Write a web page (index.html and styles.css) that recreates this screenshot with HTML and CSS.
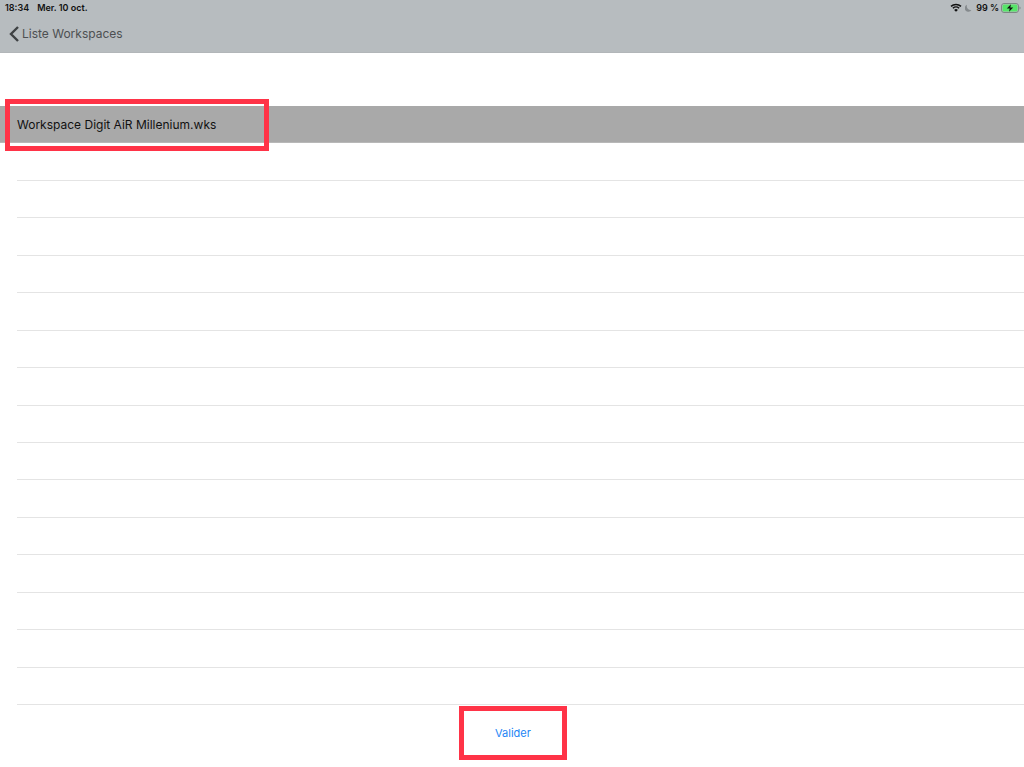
FILE: index.html
```html
<!DOCTYPE html>
<html lang="fr">
<head>
    <meta charset="UTF-8">
    <meta name="viewport" content="width=device-width, initial-scale=1.0">
    <title>Liste Workspaces</title>
    <link rel="stylesheet" href="styles.css">
</head>
<body>

<header class="header">
    <div class="status">
        <span>18:34</span>
        <span class="date">Mer. 10 oct.</span>
        <svg class="wifi" width="12" height="9" viewBox="0 0 12 9">
            <path d="M1 3.4a7.2 7.2 0 0 1 10 0M2.9 5.3a4.5 4.5 0 0 1 6.2 0" fill="none" stroke="#111" stroke-width="1.5"/>
            <path d="M6 8.8L4.1 6.9a2.7 2.7 0 0 1 3.8 0z" fill="#111"/>
        </svg>
        <svg class="moon" width="7" height="8" viewBox="0 0 7 8">
            <path d="M2 .8A3.6 3.6 0 1 0 6.4 6 4 4 0 0 1 2 .8z" fill="#858a8d"/>
        </svg>
        <span>99 %</span>
        <svg class="battery" width="20" height="10" viewBox="0 0 20 10">
            <rect x=".5" y=".5" width="17" height="9" rx="2.5" fill="#b7bcbf" stroke="#7d8784"/>
            <rect x="1.5" y="1.5" width="15" height="7" rx="1.5" fill="#56e569"/>
            <path d="M18.5 3.5a1.6 1.6 0 0 1 0 3z" fill="#7d8784"/>
            <path d="M10 1.2L5.8 5.4h2.9L8 8.8l4.2-4.2H9.3z" fill="#111"/>
        </svg>
    </div>
    <nav class="nav">
        <a class="back" href="#">
            <svg width="10" height="16" viewBox="0 0 10 16">
                <path d="M9 1L2 8l7 7" fill="none" stroke="#3f4244" stroke-width="2.4"/>
            </svg>
            Liste Workspaces
        </a>
    </nav>
</header>

<main class="content">
    <ul class="list">
        <li class="row selected">Workspace Digit AiR Millenium.wks</li>
        <li class="row"></li>
        <li class="row"></li>
        <li class="row"></li>
        <li class="row"></li>
        <li class="row"></li>
        <li class="row"></li>
        <li class="row"></li>
        <li class="row"></li>
        <li class="row"></li>
        <li class="row"></li>
        <li class="row"></li>
        <li class="row"></li>
        <li class="row"></li>
        <li class="row"></li>
        <li class="row"></li>
    </ul>
</main>

<footer class="footer">
    <button type="button" class="validate">Valider</button>
</footer>

</body>
</html>
```

FILE: styles.css
```css
* {
    box-sizing: border-box;
}
body {
    display: flex;
    flex-direction: column;
    min-height: 100vh;
    margin: 0;
    background-color: white;
    color: #111;
    font-family: Inter, "Liberation Sans", sans-serif;
    font-size: 12px;
}
.header {
    height: 53px;
    background-color: #b7bcbf;
    border-bottom: 1px solid #b2b6b9;
}
.status {
    display: flex;
    align-items: center;
    height: 15px;
    padding: 0 3px 0 5px;
    font-size: 9px;
    font-weight: 600;
}
.date {
    margin-left: 8px;
}
.wifi {
    margin-left: auto;
}
.moon {
    margin: 0 4px 0 3px;
}
.battery {
    margin-left: 2px;
}
.nav {
    display: flex;
    align-items: center;
    height: 37px;
    padding: 0 9px;
}
.back {
    display: flex;
    align-items: center;
    gap: 3px;
    color: #4d5052;
    text-decoration: none;
}
.content {
    display: flex;
    flex: 1;
    padding-top: 53px;
}
.list {
    display: flex;
    flex: 1;
    flex-direction: column;
    margin: 0;
    padding: 0;
    list-style: none;
}
.row {
    flex: 1;
    min-height: 36px;
    margin-left: 17px;
    border-bottom: 1px solid #e4e4e4;
}
.selected {
    display: flex;
    align-items: center;
    position: relative;
    margin-left: 0;
    padding-left: 17px;
    background-color: #a9a9a9;
    border-bottom-color: #b8b8b8;
}
/* Red frame around the chosen file */
.selected::before {
    content: "";
    box-sizing: border-box;
    position: absolute;
    top: -7px;
    bottom: -9px;
    left: 5px;
    width: 264px;
    border: 5px solid #ff3347;
}
.footer {
    padding: 1px 0 7px 2px;
}
.validate {
    display: block;
    width: 108px;
    height: 54px;
    margin: 0 auto;
    border: 5px solid #ff3347;
    background-color: white;
    color: #2385f5;
    font-family: inherit;
    font-size: 11px;
    cursor: pointer;
}
```
